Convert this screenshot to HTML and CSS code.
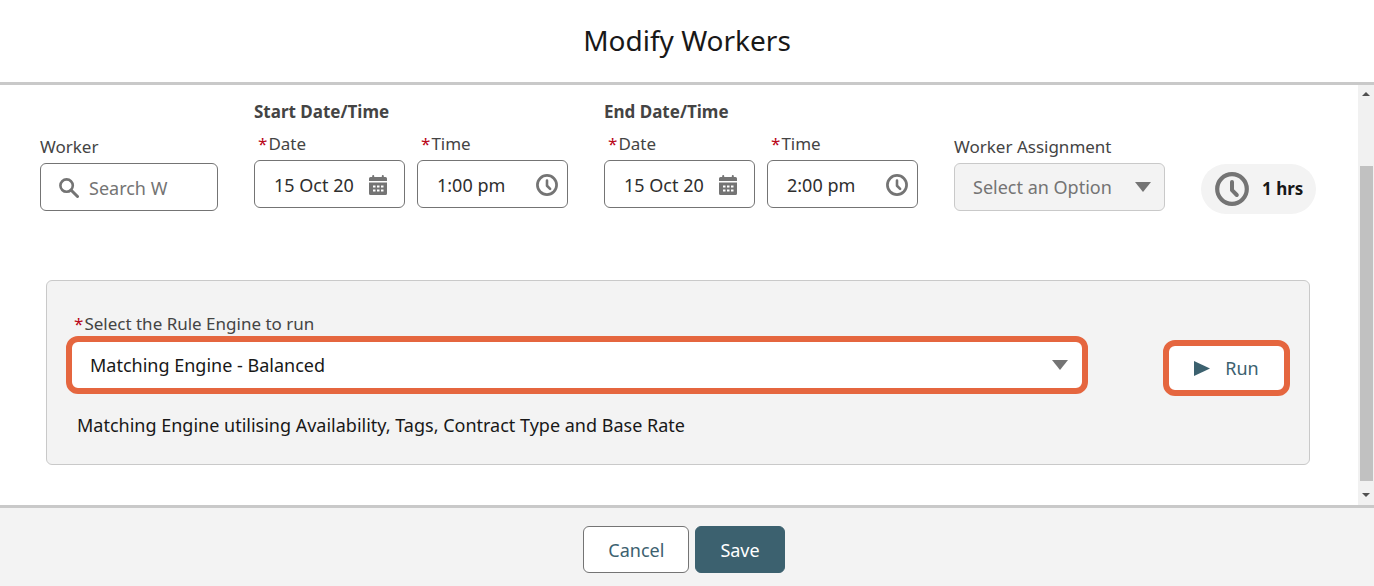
FILE: index.html
```html
<!DOCTYPE html>
<html lang="en">
<head>
    <meta charset="utf-8">
    <title>Modify Workers</title>
    <link rel="stylesheet" href="styles.css">
</head>
<body>
    <!-- shared icons -->
    <svg class="sprite" width="0" height="0" aria-hidden="true">
        <symbol id="clock" viewBox="0 0 34 34">
            <circle cx="17" cy="17" r="14.8" fill="none" stroke="currentColor" stroke-width="4.2"/>
            <path d="M17 10v8.200l4.800 4.800" fill="none" stroke="currentColor" stroke-width="4" stroke-linecap="round" stroke-linejoin="round"/>
        </symbol>
        <symbol id="calendar" viewBox="0 0 18 20">
            <path fill="currentColor" d="M1.500 2H3.200V1a1 1 0 0 1 2 0V2h7.600V1a1 1 0 0 1 2 0V2h1.700A1.500 1.500 0 0 1 18 3.500V6H0V3.500A1.500 1.500 0 0 1 1.500 2z"/>
            <path fill="currentColor" fill-rule="evenodd" d="M0 7.500h18v11a1.500 1.500 0 0 1-1.500 1.500h-15A1.500 1.500 0 0 1 0 18.500zM4 10.500v2h2.500v-2zM8 10.500v2h2.500v-2zM12 10.500v2h2.500v-2zM4 14.500v2h2.500v-2zM8 14.500v2h2.500v-2zM12 14.500v2h2.500v-2z"/>
        </symbol>
        <symbol id="search" viewBox="0 0 20 20">
            <circle cx="7.600" cy="7.600" r="6.200" fill="none" stroke="currentColor" stroke-width="2.600"/>
            <path d="M12 12l6.500 6.500" stroke="currentColor" stroke-width="3" stroke-linecap="round"/>
        </symbol>
        <symbol id="down" viewBox="0 0 16 10">
            <path fill="currentColor" d="M0 0h16L8 10z"/>
        </symbol>
    </svg>

    <header class="header">
        <h1>Modify Workers</h1>
    </header>

    <div class="body">
        <main class="content">
            <div class="filters">
                <div class="field worker">
                    <label for="worker">Worker</label>
                    <div class="box">
                        <svg class="icon-search"><use href="#search"/></svg>
                        <input type="text" id="worker" placeholder="Search W">
                    </div>
                </div>

                <fieldset class="period">
                    <legend>Start Date/Time</legend>
                    <div class="pair">
                        <div class="field">
                            <label for="start-date" class="required"><abbr>*</abbr>Date</label>
                            <div class="box">
                                <input type="text" id="start-date" value="15 Oct 20">
                                <svg class="icon-calendar"><use href="#calendar"/></svg>
                            </div>
                        </div>
                        <div class="field">
                            <label for="start-time" class="required"><abbr>*</abbr>Time</label>
                            <div class="box time">
                                <input type="text" id="start-time" value="1:00 pm">
                                <svg class="icon-clock"><use href="#clock"/></svg>
                            </div>
                        </div>
                    </div>
                </fieldset>

                <fieldset class="period">
                    <legend>End Date/Time</legend>
                    <div class="pair">
                        <div class="field">
                            <label for="end-date" class="required"><abbr>*</abbr>Date</label>
                            <div class="box">
                                <input type="text" id="end-date" value="15 Oct 20">
                                <svg class="icon-calendar"><use href="#calendar"/></svg>
                            </div>
                        </div>
                        <div class="field">
                            <label for="end-time" class="required"><abbr>*</abbr>Time</label>
                            <div class="box time">
                                <input type="text" id="end-time" value="2:00 pm">
                                <svg class="icon-clock"><use href="#clock"/></svg>
                            </div>
                        </div>
                    </div>
                </fieldset>

                <div class="field worker">
                    <label for="assignment">Worker Assignment</label>
                    <div class="select">
                        <select id="assignment" disabled>
                            <option>Select an Option</option>
                        </select>
                        <svg class="arrow"><use href="#down"/></svg>
                    </div>
                </div>

                <div class="hours">
                    <svg class="icon-hours"><use href="#clock"/></svg>
                    <span>1 hrs</span>
                </div>
            </div>

            <section class="engine">
                <div class="rule">
                    <label for="engine" class="required"><abbr>*</abbr>Select the Rule Engine to run</label>
                    <div class="select highlight">
                        <select id="engine">
                            <option>Matching Engine - Balanced</option>
                        </select>
                        <svg class="arrow"><use href="#down"/></svg>
                    </div>
                    <p>Matching Engine utilising Availability, Tags, Contract Type and Base Rate</p>
                </div>
                <button type="button" class="run">
                    <svg class="icon-play" viewBox="0 0 16 16"><path fill="currentColor" d="M0 1l16 7.500L0 16z"/></svg>
                    Run
                </button>
            </section>
        </main>

        <div class="scrollbar" aria-hidden="true">
            <svg viewBox="0 0 8 4"><path fill="currentColor" d="M0 4l4-4 4 4z"/></svg>
            <div class="thumb"></div>
            <svg viewBox="0 0 8 4"><path fill="currentColor" d="M0 0h8L4 4z"/></svg>
        </div>
    </div>

    <footer class="footer">
        <button type="button" class="cancel">Cancel</button>
        <button type="button" class="save">Save</button>
    </footer>
</body>
</html>
```
FILE: styles.css
```css
* {
    box-sizing: border-box;
}

body {
    margin: 0;
    min-height: 100vh;
    display: flex;
    flex-direction: column;
    background: #fff;
    color: #181818;
    font-family: "Segoe UI", "Noto Sans", sans-serif;
    font-size: 18px;
    line-height: 24px;
}

input,
select,
button {
    font: inherit;
    color: inherit;
}

svg {
    display: block;
    flex: none;
    color: #747474;
}

.sprite {
    position: absolute;
}

/* header */
.header {
    padding: 19px 20px 21px;
    border-bottom: 3px solid #c9c9c9;
    text-align: center;
}

h1 {
    margin: 0;
    font-size: 28px;
    line-height: 42px;
    font-weight: 400;
}

.body {
    flex: 1;
    display: flex;
}

.content {
    flex: 1;
    padding: 15px 42px 40px 40px;
}

/* top row */
.filters {
    display: grid;
    grid-template-columns: 178fr 314fr 314fr 211fr 115fr;
    gap: 36px;
    align-items: end;
}

.field,
.period {
    min-width: 0;
}

.worker {
    padding-bottom: 3px;
}

.period {
    margin: 0;
    padding: 0 0 6px;
    border: 0;
}

legend {
    padding: 0;
    margin-bottom: 8px;
    font-size: 17px;
    font-weight: 700;
    color: #444;
}

label {
    display: block;
    margin-bottom: 4px;
    font-size: 17px;
    color: #444;
}

.required {
    padding-left: 4px;
}

abbr {
    margin-right: 1px;
    color: #ba0517;
}

.pair {
    display: grid;
    grid-template-columns: 1fr 1fr;
    gap: 12px;
}

.box {
    display: flex;
    align-items: center;
    gap: 10px;
    height: 48px;
    padding: 2px 17px 0 19px;
    border: 1px solid #747474;
    border-radius: 6px;
    background: #fff;
}

.box input {
    flex: 1;
    min-width: 0;
    padding: 0;
    border: 0;
    outline: 0;
    background: none;
    color: #2e2e2e;
}

.worker .box {
    padding: 1px 47px 0 18px;
}

.box.time {
    padding-right: 9px;
}

input::placeholder {
    color: #747474;
    opacity: 1;
}

.icon-search {
    width: 20px;
    height: 20px;
}

.icon-calendar {
    width: 18px;
    height: 20px;
}

.icon-clock {
    width: 22px;
    height: 22px;
}

.select {
    display: grid;
    align-items: center;
}

.select select,
.select .arrow {
    grid-area: 1 / 1;
}

.select select {
    appearance: none;
    width: 100%;
    height: 48px;
    padding: 0 40px 0 18px;
    border: 1px solid #c9c9c9;
    border-radius: 6px;
    background: #f3f3f3;
    color: #747474;
    opacity: 1;
}

.arrow {
    justify-self: end;
    width: 16px;
    height: 10px;
    margin-right: 14px;
    pointer-events: none;
}

.hours {
    display: flex;
    align-items: center;
    gap: 13px;
    height: 50px;
    padding: 0 12px 0 14px;
    border-radius: 25px;
    background: #f3f3f3;
    font-size: 17px;
    font-weight: 700;
    white-space: nowrap;
}

.icon-hours {
    width: 34px;
    height: 34px;
}

/* rule engine */
.engine {
    display: flex;
    align-items: flex-start;
    gap: 75px;
    margin: 66px 6px 0;
    padding: 31px 19px 27px;
    border: 1px solid #c9c9c9;
    border-radius: 6px;
    background: #f3f3f3;
}

.rule {
    flex: 1;
}

.rule label {
    margin: 0;
    padding-left: 8px;
}

.highlight select {
    height: 58px;
    border: 6px solid #e5663f;
    border-radius: 12px;
    background: #fff;
    color: #181818;
}

.highlight .arrow {
    margin-right: 20px;
}

.rule p {
    margin: 19px 0 0 11px;
}

.run {
    display: flex;
    align-items: center;
    justify-content: center;
    gap: 15px;
    width: 127px;
    height: 56px;
    margin-top: 28px;
    border: 6px solid #e5663f;
    border-radius: 12px;
    background: #fff;
    color: #3c616f;
}

.icon-play {
    width: 16px;
    height: 16px;
    color: inherit;
}

/* scrollbar */
.scrollbar {
    display: flex;
    flex-direction: column;
    align-items: center;
    width: 16px;
    padding: 7px 2px 8px;
    background: #f1f1f1;
}

.scrollbar svg {
    width: 8px;
    height: 4px;
    color: #505050;
}

.thumb {
    flex: 1;
    width: 13px;
    margin: 70px 0 12px;
    background: #c1c1c1;
}

/* footer */
.footer {
    display: flex;
    justify-content: center;
    gap: 6px;
    padding: 18px 26px 13px 20px;
    border-top: 3px solid #c9c9c9;
    background: #f3f3f3;
}

.footer button {
    height: 47px;
    padding: 0 24px;
    border: 1px solid #747474;
    border-radius: 6px;
    background: #fff;
    color: #3c616f;
}

.footer .save {
    border-color: #3c616f;
    background: #3c616f;
    color: #fff;
}

button {
    cursor: pointer;
}
```
